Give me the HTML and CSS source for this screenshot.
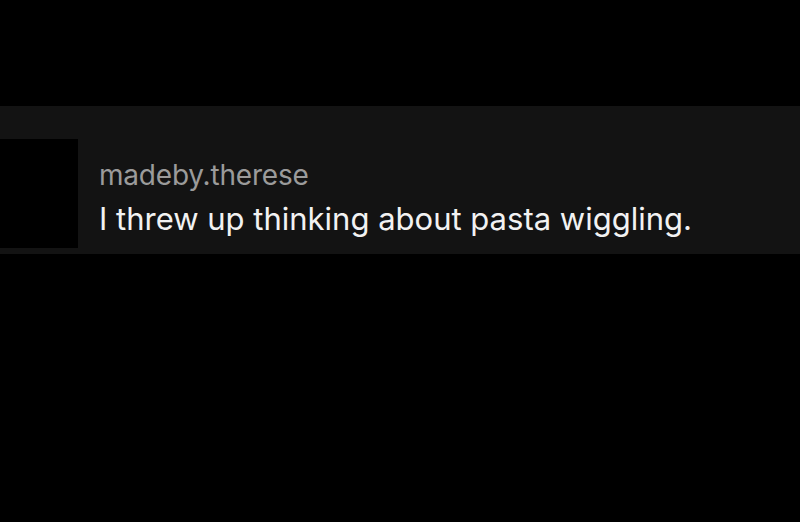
FILE: index.html
```html
<!DOCTYPE html>
<html>
<head>
<meta charset="utf-8">
<link rel="stylesheet" href="styles.css">
</head>
<body>
<div class="page">
  <div class="comment">
    <div class="avatar"></div>
    <div class="body">
      <div class="user">madeby.therese</div>
      <div class="text">I threw up thinking about pasta wiggling.</div>
    </div>
  </div>
</div>
</body>
</html>
```
FILE: styles.css
```css
html, body {
  margin: 0;
  padding: 0;
  background: #000;
}
.page {
  width: 800px;
  height: 522px;
  background: #000;
  padding-top: 106px;
  box-sizing: border-box;
}
.comment {
  height: 148px;
  background: #131313;
  display: flex;
  align-items: flex-start;
  padding-top: 33px;
  box-sizing: border-box;
}
.avatar {
  width: 78px;
  height: 109px;
  background: #000;
  flex: none;
}
.body {
  margin-left: 21px;
  font-family: Inter, "Liberation Sans", sans-serif;
  -webkit-font-smoothing: antialiased;
}
.user {
  color: #9b9b9b;
  font-size: 28px;
  line-height: 30px;
  margin-top: 21px;
  letter-spacing: -0.2px;
}
.text {
  color: #f2f2f2;
  font-size: 31px;
  line-height: 38px;
  margin-top: 10px;
}
```
